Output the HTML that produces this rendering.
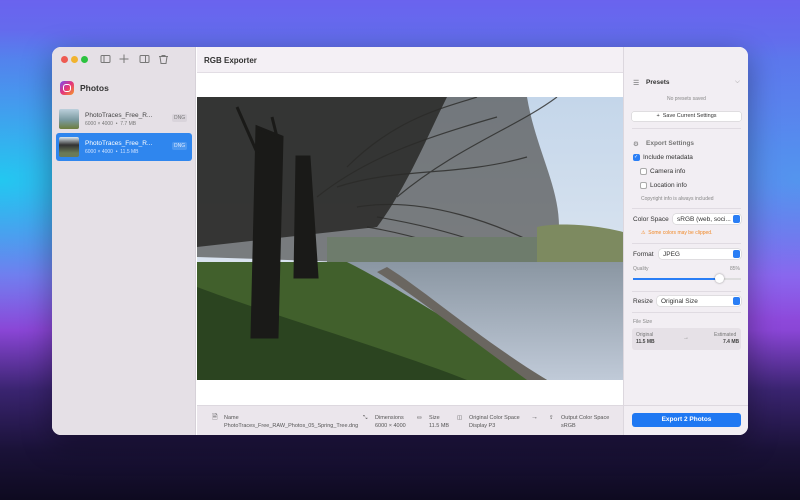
<!DOCTYPE html>
<html><head><meta charset="utf-8"><style>
*{margin:0;padding:0;box-sizing:border-box}
body{width:800px;height:500px;overflow:hidden;font-family:"Liberation Sans",sans-serif;position:relative;
background:radial-gradient(ellipse 320px 150px at 0px 180px,rgba(30,205,240,.95),rgba(40,200,240,0)),
radial-gradient(ellipse 280px 140px at 800px 180px,rgba(60,180,240,.6),rgba(60,180,240,0)),
linear-gradient(180deg,#6a63ee 0%,#5f72ec 12%,#6a6cec 30%,#9b55ee 55%,#8a46d6 66%,#3a2470 78%,#1a1238 90%,#0e0a20 100%);}
.win{position:absolute;left:52px;top:47px;width:696px;height:388px;border-radius:9px;overflow:hidden;background:#fff;box-shadow:0 8px 30px rgba(0,0,0,.35)}
.side{position:absolute;left:0;top:0;width:144px;height:388px;background:#e5e0e6;border-right:1px solid #d6d1d8}
.dot{position:absolute;top:9px;width:7px;height:7px;border-radius:50%}
.hdr{position:absolute;left:145px;top:0;width:426px;height:26px;background:#f4f0f5;border-bottom:1px solid #e2dde4;font-size:8px;font-weight:bold;color:#333;padding:9px 0 0 7px}
.foot{position:absolute;left:145px;top:358px;width:426px;height:30px;background:#ebe6ec;border-top:1px solid #ddd8df}
.right{position:absolute;left:571px;top:0;width:125px;height:388px;background:#f2eef3;border-left:1px solid #dcd7de;font-size:6.5px;color:#333}
.t{position:absolute;white-space:nowrap}
.sel{position:absolute;height:10px;background:#fff;border-radius:3px;box-shadow:0 0 0 .5px #ccc;font-size:6.5px;padding:1.5px 4px}
.sel i{position:absolute;right:1px;top:1px;width:7px;height:8px;background:#2a7ef5;border-radius:2px}
.hr{position:absolute;left:8px;width:109px;height:1px;background:#e0dbe2}
.cb{position:absolute;width:7px;height:7px;border:1px solid #aaa;border-radius:2px;background:#fff}
.fl{position:absolute;top:8px;font-size:5.5px;color:#555;line-height:8px}
</style></head><body>
<div class="win">
 <div class="side">
  <div class="dot" style="left:9px;background:#ee5a52"></div>
  <div class="dot" style="left:19px;background:#f1b32f"></div>
  <div class="dot" style="left:29px;background:#2cc23f"></div>
  <svg style="position:absolute;left:48px;top:7px" width="70" height="11" stroke="#777" fill="none" stroke-width="1">
   <rect x="1" y="1.5" width="9" height="7" rx="1"/><line x1="4" y1="1.5" x2="4" y2="8.5"/>
   <line x1="24" y1="0.5" x2="24" y2="9"/><line x1="19.5" y1="5" x2="28.5" y2="5"/>
   <rect x="40" y="1.5" width="9" height="7" rx="1"/><line x1="45.5" y1="1.5" x2="45.5" y2="8.5"/>
   <path d="M59 2.5h9M62 2.5v-1h3v1M60 2.5l1 7h5l1-7"/></svg>
  <div style="position:absolute;left:8px;top:34px;width:14px;height:14px;border-radius:4px;background:linear-gradient(135deg,#7a4cf0,#e5357a,#f59a2a)"><div style="margin:3px;width:8px;height:8px;border:1.3px solid #fff;border-radius:3px"></div></div>
  <div class="t" style="left:28px;top:36px;font-size:8.5px;font-weight:bold;color:#333">Photos</div>
  <div style="position:absolute;left:7px;top:62px;width:20px;height:20px;background:linear-gradient(180deg,#bcd0dc,#7a9aa0 55%,#6d7d3c);border-radius:2px"></div>
  <div class="t" style="left:33px;top:65px;font-size:6.5px;color:#444">PhotoTraces_Free_R...</div>
  <div class="t" style="left:33px;top:74px;font-size:5px;color:#777">6000 × 4000 &nbsp;•&nbsp; 7.7 MB</div>
  <div class="t" style="left:120px;top:67px;font-size:5px;color:#777;background:#d9d4db;padding:1px 2px;border-radius:2px">DNG</div>
  <div style="position:absolute;left:4px;top:86px;width:136px;height:28px;background:#2f86ee;border-radius:3px"></div>
  <div style="position:absolute;left:7px;top:90px;width:20px;height:20px;background:linear-gradient(180deg,#dde8ef,#333 40%,#6a7a58 80%);border-radius:2px"></div>
  <div class="t" style="left:33px;top:93px;font-size:6.5px;color:#fff">PhotoTraces_Free_R...</div>
  <div class="t" style="left:33px;top:102px;font-size:5px;color:#cfe2ff">6000 × 4000 &nbsp;•&nbsp; 11.5 MB</div>
  <div class="t" style="left:120px;top:95px;font-size:5px;color:#dbe8ff;background:#4d98f0;padding:1px 2px;border-radius:2px">DNG</div>
 </div>
 <div class="hdr">RGB Exporter</div>
 <svg style="position:absolute;left:145px;top:50px" width="426" height="283" viewBox="0 0 426 283" preserveAspectRatio="none">
  <defs>
   <linearGradient id="sky" x1="0" y1="0" x2="0" y2="1"><stop offset="0" stop-color="#c4d6ea"/><stop offset="1" stop-color="#e8edf3"/></linearGradient>
   <linearGradient id="wat" x1="0" y1="0" x2="0" y2="1"><stop offset="0" stop-color="#8a96a2"/><stop offset="1" stop-color="#c0cad8"/></linearGradient>
  </defs>
  <rect width="426" height="283" fill="url(#sky)"/>
  <path d="M0 0H330C340 60 370 100 360 150L150 165L0 160Z" fill="#50504e" opacity=".7"/>
  <path d="M0 0H250C230 40 210 90 180 130L0 150Z" fill="#2e2e2c" opacity=".9"/>
  <g stroke="#2a2a28" stroke-width="1.2" fill="none" opacity=".8">
   <path d="M120 100C170 60 230 40 300 20M140 90C200 70 260 80 330 60M160 110C220 100 300 120 380 170M180 120C240 130 320 150 390 200M200 100C260 50 320 30 360 0M150 70C200 20 250 10 280 0M170 130C230 140 280 160 340 180"/>
  </g>
  <rect x="130" y="140" width="296" height="30" fill="#6e7c6c"/>
  <path d="M340 130C360 125 400 128 426 135V170H340Z" fill="#7d8a60"/>
  <path d="M140 165H426V283H310C280 250 240 220 150 175Z" fill="url(#wat)"/>
  <path d="M0 165H150C200 190 260 230 350 283H0Z" fill="#41602c"/>
  <path d="M0 190C80 220 200 255 270 283H0Z" fill="#2b4420"/>
  <path d="M190 170C230 195 280 240 350 283H330C270 240 220 200 180 175Z" fill="#6a6660"/>
  <path d="M60 30L55 240H80L85 40Z M100 60L98 180H120L112 60Z M75 20L80 40M40 10L62 60" fill="#1a1a18" stroke="#1a1a18" stroke-width="3"/>
 </svg>
 <div class="foot">
  <div class="fl" style="left:15px"><span style="font-size:7px">🗎</span></div>
  <div class="fl" style="left:27px">Name<br>PhotoTraces_Free_RAW_Photos_05_Spring_Tree.dng</div>
  <div class="fl" style="left:166px">⤡</div>
  <div class="fl" style="left:178px">Dimensions<br>6000 × 4000</div>
  <div class="fl" style="left:220px">⛀</div>
  <div class="fl" style="left:232px">Size<br>11.5 MB</div>
  <div class="fl" style="left:260px">◫</div>
  <div class="fl" style="left:272px">Original Color Space<br>Display P3</div>
  <div class="fl" style="left:334px;font-size:7px">→</div>
  <div class="fl" style="left:352px">⇪</div>
  <div class="fl" style="left:364px">Output Color Space<br>sRGB</div>
 </div>
 <div class="right">
  <div class="t" style="left:9px;top:32px;font-size:7px;color:#666">☰</div>
  <div class="t" style="left:22px;top:32px;font-weight:bold;font-size:6.5px">Presets</div>
  <div class="t" style="left:111px;top:31px;color:#888">⌵</div>
  <div class="t" style="left:43px;top:49px;font-size:5px;color:#888">No presets saved</div>
  <div style="position:absolute;left:8px;top:65px;width:109px;height:9px;background:#fff;border-radius:2px;box-shadow:0 0 0 .5px #ccc;font-size:5.5px;text-align:center;line-height:9px">+ &nbsp;Save Current Settings</div>
  <div class="hr" style="top:81px"></div>
  <div class="t" style="left:9px;top:93px;color:#777">⚙</div>
  <div class="t" style="left:22px;top:93px;font-weight:bold;color:#777">Export Settings</div>
  <div class="cb" style="left:9px;top:107px;background:#2a7ef5;border-color:#2a7ef5;color:#fff;font-size:5px;line-height:5px">✓</div>
  <div class="t" style="left:19px;top:107px">Include metadata</div>
  <div class="cb" style="left:16px;top:121px"></div><div class="t" style="left:26px;top:121px">Camera info</div>
  <div class="cb" style="left:16px;top:135px"></div><div class="t" style="left:26px;top:135px">Location info</div>
  <div class="t" style="left:17px;top:149px;font-size:5px;color:#888">Copyright info is always included</div>
  <div class="hr" style="top:161px"></div>
  <div class="t" style="left:9px;top:169px">Color Space</div>
  <div class="sel" style="left:49px;top:167px;width:68px">sRGB (web, soci...<i></i></div>
  <div class="t" style="left:17px;top:183px;font-size:5px;color:#f08a2a">⚠ &nbsp;Some colors may be clipped.</div>
  <div class="hr" style="top:196px"></div>
  <div class="t" style="left:9px;top:204px">Format</div>
  <div class="sel" style="left:35px;top:202px;width:82px">JPEG<i></i></div>
  <div class="t" style="left:9px;top:219px;font-size:5px;color:#888">Quality</div>
  <div class="t" style="left:106px;top:219px;font-size:5px;color:#888">85%</div>
  <div style="position:absolute;left:9px;top:231px;width:108px;height:2px;background:#ddd"></div>
  <div style="position:absolute;left:9px;top:231px;width:88px;height:2px;background:#2a7ef5"></div>
  <div style="position:absolute;left:91px;top:227px;width:9px;height:9px;border-radius:50%;background:#fff;box-shadow:0 0 2px rgba(0,0,0,.4)"></div>
  <div class="hr" style="top:244px"></div>
  <div class="t" style="left:9px;top:251px">Resize</div>
  <div class="sel" style="left:33px;top:249px;width:84px">Original Size<i></i></div>
  <div class="hr" style="top:265px"></div>
  <div class="t" style="left:9px;top:272px;font-size:5px;color:#888">File Size</div>
  <div style="position:absolute;left:8px;top:281px;width:109px;height:22px;background:#e6e1e7;border-radius:3px"></div>
  <div class="t" style="left:12px;top:285px;font-size:5px;color:#777">Original</div>
  <div class="t" style="left:12px;top:292px;font-size:5px;font-weight:bold;color:#444">11.5 MB</div>
  <div class="t" style="left:59px;top:288px;font-size:6px;color:#888">→</div>
  <div class="t" style="left:90px;top:285px;font-size:5px;color:#777">Estimated</div>
  <div class="t" style="left:99px;top:292px;font-size:5px;font-weight:bold;color:#444">7.4 MB</div>
  <div style="position:absolute;left:0;top:358px;width:125px;height:30px;border-top:1px solid #ddd8df"></div>
  <div style="position:absolute;left:8px;top:366px;width:109px;height:14px;background:#1f78f2;border-radius:3px;color:#fff;font-weight:bold;font-size:6.5px;text-align:center;line-height:14px">Export 2 Photos</div>
 </div>
</div>
</body></html>
